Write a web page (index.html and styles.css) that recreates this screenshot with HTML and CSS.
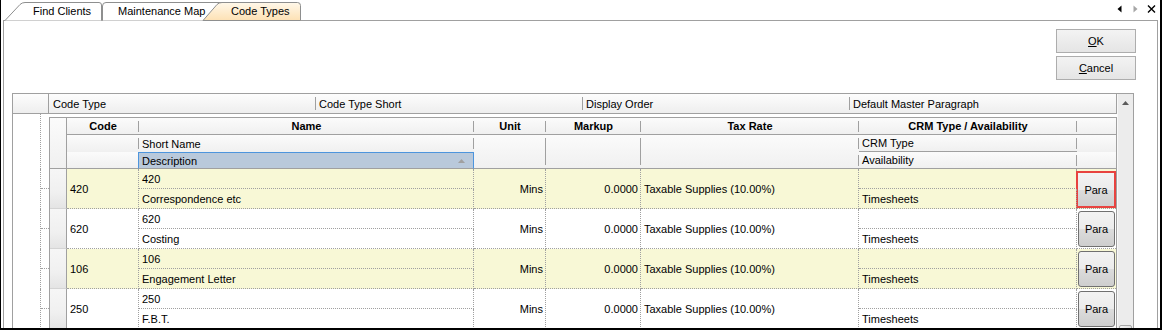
FILE: index.html
```html
<!DOCTYPE html>
<html lang="en">
<head>
    <meta charset="UTF-8">
    <title>Code Types</title>
    <link rel="stylesheet" href="styles.css">
</head>
<body>
    <div class="window">
        <div class="tabstrip">
            <svg class="tab-shapes" width="1159" height="21" viewBox="1 0 1159 21">
                <defs>
                    <linearGradient id="activeTab" x1="0" y1="0" x2="0" y2="1">
                        <stop offset="0" stop-color="#fff8ea"/>
                        <stop offset="1" stop-color="#fde1b4"/>
                    </linearGradient>
                </defs>
                <line x1="3" y1="20.5" x2="1158" y2="20.5" stroke="#a0a0a0"/>
                <path d="M5 20.5 L20 4.5 Q22 2.5 25 2.5 H99 Q101.5 2.5 101.5 5 V20.5" fill="#fff" stroke="#8e8f8f"/>
                <path d="M102.5 20.5 V6 Q102.5 2.5 106 2.5 H230 V20.5" fill="#fff" stroke="#8e8f8f"/>
                <path d="M203 20.5 L217 4.5 Q219 2.5 222 2.5 H297.5 Q300.5 2.5 300.5 5.5 V20.5 Z" fill="url(#activeTab)" stroke="#8e8f8f"/>
                <!-- scroll / close buttons -->
                <path d="M1121.5 5.5 V12.5 L1117.5 9 Z" fill="#000"/>
                <path d="M1133.5 5.5 V12.5 L1137.5 9 Z" fill="#a6a6a6"/>
                <path d="M1148 5.5 L1155 12.5 M1155 5.5 L1148 12.5" stroke="#000" stroke-width="1.4"/>
            </svg>
            <div class="tab-labels">
                <span class="tab tab-find">Find Clients</span>
                <span class="tab tab-map">Maintenance Map</span>
                <span class="tab tab-codes">Code Types</span>
            </div>
        </div>

        <div class="panel">
            <div class="actions">
                <button class="btn"><u>O</u>K</button>
                <button class="btn"><u>C</u>ancel</button>
            </div>

            <div class="grid">
                <div class="grid-main">
                    <div class="band-head">
                        <div class="bh-corner"></div>
                        <div class="bh-col first">Code Type</div>
                        <div class="bh-col">Code Type Short</div>
                        <div class="bh-col">Display Order</div>
                        <div class="bh-col last">Default Master Paragraph</div>
                    </div>

                    <div class="band-body">
                        <div class="tree">
                            <div class="tree-head"></div>
                            <div class="tree-row"><div class="trunk"></div><div class="twig"></div></div>
                            <div class="tree-row"><div class="trunk"></div><div class="twig"></div></div>
                            <div class="tree-row"><div class="trunk"></div><div class="twig"></div></div>
                            <div class="tree-row"><div class="trunk"></div><div class="twig"></div></div>
                        </div>

                        <div class="child">
                            <div class="cols child-head">
                                <div class="hc sel-h"></div>
                                <div class="hc top b sep">Code</div>
                                <div class="hc top b sep">Name</div>
                                <div class="hc top b sep">Unit</div>
                                <div class="hc top b sep">Markup</div>
                                <div class="hc top b sep">Tax Rate</div>
                                <div class="hc top b sep">CRM Type / Availability</div>
                                <div class="hc top"></div>

                                <div class="hc sep"></div>
                                <div class="hc sep">Short Name</div>
                                <div class="hc span2 bottom tall-sep"></div>
                                <div class="hc span2 bottom tall-sep"></div>
                                <div class="hc span2 bottom double-sep"></div>
                                <div class="hc sep crm-type">CRM Type</div>
                                <div class="hc"></div>

                                <div class="hc bottom"></div>
                                <div class="hc bottom desc-h">
                                    <span>Description</span>
                                    <svg class="sort" width="7" height="4" viewBox="0 0 7 4"><path d="M0 4 L3.5 0 L7 4 Z" fill="#a0a0a0"/></svg>
                                </div>
                                <div class="hc bottom sep">Availability</div>
                                <div class="hc bottom"></div>
                            </div>

                            <div class="cols row odd">
                                <div class="sel"></div>
                                <div class="cell code">420</div>
                                <div class="cell sub">420</div>
                                <div class="cell right">Mins</div>
                                <div class="cell right">0.0000</div>
                                <div class="cell tax">Taxable Supplies (10.00%)</div>
                                <div class="cell sub"></div>
                                <div class="cell para-cell"><button class="para hl">Para</button></div>
                                <div class="cell">Correspondence etc</div>
                                <div class="cell">Timesheets</div>
                            </div>

                            <div class="cols row">
                                <div class="sel"></div>
                                <div class="cell code">620</div>
                                <div class="cell sub">620</div>
                                <div class="cell right">Mins</div>
                                <div class="cell right">0.0000</div>
                                <div class="cell tax">Taxable Supplies (10.00%)</div>
                                <div class="cell sub"></div>
                                <div class="cell para-cell"><button class="para">Para</button></div>
                                <div class="cell">Costing</div>
                                <div class="cell">Timesheets</div>
                            </div>

                            <div class="cols row odd">
                                <div class="sel"></div>
                                <div class="cell code">106</div>
                                <div class="cell sub">106</div>
                                <div class="cell right">Mins</div>
                                <div class="cell right">0.0000</div>
                                <div class="cell tax">Taxable Supplies (10.00%)</div>
                                <div class="cell sub"></div>
                                <div class="cell para-cell"><button class="para">Para</button></div>
                                <div class="cell">Engagement Letter</div>
                                <div class="cell">Timesheets</div>
                            </div>

                            <div class="cols row">
                                <div class="sel"></div>
                                <div class="cell code">250</div>
                                <div class="cell sub">250</div>
                                <div class="cell right">Mins</div>
                                <div class="cell right">0.0000</div>
                                <div class="cell tax">Taxable Supplies (10.00%)</div>
                                <div class="cell sub"></div>
                                <div class="cell para-cell"><button class="para">Para</button></div>
                                <div class="cell">F.B.T.</div>
                                <div class="cell">Timesheets</div>
                            </div>
                        </div>
                    </div>
                </div>

                <div class="vscroll">
                    <div class="sb-up">
                        <svg width="7" height="4" viewBox="0 0 7 4"><path d="M0 4 L3.5 0 L7 4 Z" fill="#5a5a5a"/></svg>
                    </div>
                    <div class="sb-track"></div>
                    <div class="sb-thumb"></div>
                </div>
            </div>
        </div>
    </div>
</body>
</html>
```

FILE: styles.css
```css
* {
    box-sizing: border-box;
}
body {
    margin: 0;
    background: #fff;
    font-family: "Liberation Sans", Arial, sans-serif;
    font-size: 11px;
    color: #000;
}
.window {
    width: 1162px;
    height: 330px;
    border-left: 1px solid #000;
    border-right: 2px solid #000;
    border-bottom: 2px solid #000;
    overflow: hidden;
    display: flex;
    flex-direction: column;
}

/* tabs */
.tabstrip {
    position: relative;
    height: 21px;
    flex: none;
}
.tab-shapes {
    position: absolute;
    left: 0;
    top: 0;
}
.tab-labels {
    position: relative;
    display: flex;
    height: 20px;
    padding-top: 2px;
    align-items: center;
}
.tab {
    white-space: nowrap;
}
.tab-find {
    width: 100px;
    padding-left: 32px;
}
.tab-map {
    width: 102px;
    padding-left: 17px;
}
.tab-codes {
    width: 97px;
    padding-left: 28px;
}

/* panel */
.panel {
    flex: 1;
    min-height: 0;
    margin: 0 2px;
    border-left: 1px solid #a0a0a0;
    border-right: 1px solid #a0a0a0;
    padding: 8px 21px 0 8px;
    display: flex;
    flex-direction: column;
}
.actions {
    display: flex;
    flex-direction: column;
    align-items: flex-end;
    gap: 3px;
}
.btn {
    width: 80px;
    height: 24px;
    padding: 0;
    border: 1px solid #adadad;
    background: linear-gradient(#f3f3f3, #e5e5e5);
    font-family: "Liberation Sans", Arial, sans-serif;
    font-size: 11px;
    color: #000;
}

/* grid */
.grid {
    flex: 1;
    min-height: 0;
    width: 1122px;
    margin-top: 13px;
    border: 1px solid #a0a0a0;
    border-bottom: none;
    display: flex;
}
.grid-main {
    width: 1104px;
    flex: none;
}
.band-head {
    display: flex;
    height: 20px;
    border-bottom: 1px solid #a0a0a0;
    background: linear-gradient(#fdfdfd, #eeeeee);
}
.bh-corner {
    width: 36px;
    border-right: 1px solid #a0a0a0;
}
.bh-col {
    width: 267px;
    display: flex;
    align-items: center;
    padding-left: 3px;
    background: linear-gradient(#a0a0a0, #a0a0a0) right center / 1px 13px no-repeat;
}
.bh-col.first {
    padding-left: 4px;
}
.bh-col.last {
    background: none;
    border-right: 1px solid #a0a0a0;
}

.band-body {
    display: flex;
}
.tree {
    width: 36px;
    flex: none;
}
.tree-head {
    width: 28px;
    height: 55px;
    border-right: 1px dotted #a0a0a0;
}
.tree-row {
    display: flex;
    height: 40px;
}
.trunk {
    width: 28px;
    border-right: 1px dotted #a0a0a0;
}
.twig {
    width: 8px;
    height: 20px;
    border-bottom: 1px dotted #a0a0a0;
}

.child {
    width: 1068px;
    margin-top: 3px;
    border: 1px solid #a0a0a0;
    border-bottom: none;
}
.cols {
    display: grid;
    grid-template-columns: 17px 72px 335px 72px 95px 218px 218px 39px;
}

/* child header */
.child-head {
    grid-template-rows: 17px 17px 17px;
}
.hc {
    display: flex;
    align-items: center;
    padding: 0 3px;
    white-space: nowrap;
    overflow: hidden;
    background: linear-gradient(#fbfbfb, #f0f0f0);
}
.hc.b {
    font-weight: bold;
    justify-content: center;
}
.hc.top,
.hc.bottom {
    border-bottom: 1px solid #a0a0a0;
}
.hc.sep {
    background: linear-gradient(#a0a0a0, #a0a0a0) right center / 1px 11px no-repeat,
        linear-gradient(#fbfbfb, #f0f0f0);
}
.hc.span2 {
    grid-row: span 2;
}
.hc.tall-sep {
    background: linear-gradient(#a0a0a0, #a0a0a0) right 0 top 3px / 1px 27px no-repeat,
        linear-gradient(#fbfbfb, #f0f0f0);
}
.hc.double-sep {
    background: linear-gradient(#a0a0a0, #a0a0a0) right 0 top 3px / 1px 11px no-repeat,
        linear-gradient(#a0a0a0, #a0a0a0) right 0 top 20px / 1px 11px no-repeat,
        linear-gradient(#fbfbfb, #f0f0f0);
}
.sel-h {
    grid-row: span 3;
    border-right: 1px solid #a0a0a0;
    border-bottom: 1px solid #a0a0a0;
}
.crm-type {
    border-bottom: 1px solid #a0a0a0;
}
.desc-h {
    margin-left: -1px;
    justify-content: space-between;
    background: #b9c9db;
    border: 1px solid #4d95dd;
    padding-left: 3px;
    padding-right: 8px;
}
.sort {
    flex: none;
}

/* data rows */
.row {
    grid-template-rows: 20px 20px;
    background: #fff;
}
.row.odd {
    background: #f8f8d6;
}
.sel {
    grid-row: span 2;
    border-right: 1px solid #a0a0a0;
    border-bottom: 1px solid #d4d4d4;
    background: linear-gradient(#f6f6f6, #f0f0f0 60%, #e4e4e4);
}
.cell {
    display: flex;
    align-items: center;
    padding: 0 3px;
    white-space: nowrap;
    border-right: 1px dotted #a0a0a0;
    border-bottom: 1px dotted #a0a0a0;
}
.cell.code,
.cell.right,
.cell.tax {
    grid-row: span 2;
}
.cell.right {
    justify-content: flex-end;
    padding-right: 2px;
}
.para-cell {
    grid-row: span 2;
    border-right: none;
    align-items: flex-start;
    padding: 0;
}
.para {
    width: 37px;
    height: 36px;
    margin: 2px 0 0 1px;
    padding: 0;
    border: 1px solid #707070;
    border-radius: 3px;
    background: linear-gradient(#f3f3f3, #ebebeb 50%, #dcdcdc 50%, #cecece);
    font-family: "Liberation Sans", Arial, sans-serif;
    font-size: 11px;
    color: #000;
}
.para.hl {
    width: 41px;
    height: 37px;
    margin: 2px 0 0 -1px;
    border: 2px solid #e8433f;
    border-radius: 0;
}

/* scrollbar */
.vscroll {
    width: 16px;
    flex: none;
    background: #ececec;
    border-left: 1px solid #f8f8f8;
    display: flex;
    flex-direction: column;
}
.sb-up {
    height: 17px;
    flex: none;
    display: flex;
    align-items: center;
    justify-content: center;
}
.sb-track {
    height: 214px;
    flex: none;
}
.sb-thumb {
    height: 20px;
    flex: none;
    margin: 0 1px;
    border: 1px solid #a8a8a8;
    border-radius: 2px;
    background: linear-gradient(to right, #f4f4f4, #e2e2e2);
}
```
